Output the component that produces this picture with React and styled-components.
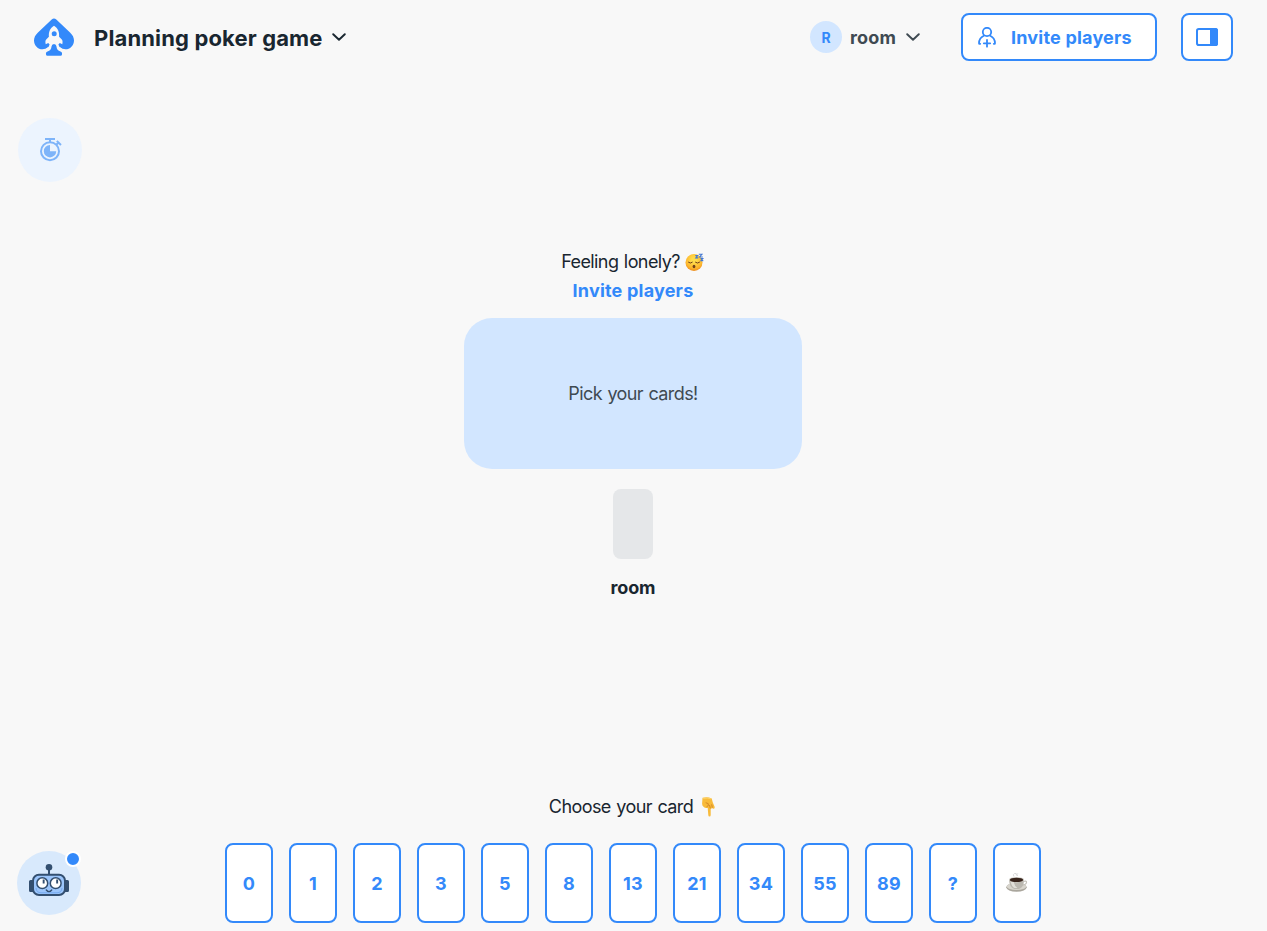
import React from "react";
import styled, { createGlobalStyle } from "styled-components";

const blue = "#3389fa";
const ink = "#192630";

const Global = createGlobalStyle`
  * { box-sizing: border-box; }
  body { margin: 0; background: #f8f8f8; color: ${ink}; font-family: Inter, "Liberation Sans", sans-serif; }
  button { font: inherit; color: inherit; cursor: pointer; }
  svg { display: block; flex: none; }
`;

const Page = styled.div`
  height: 931px;
  display: flex;
  flex-direction: column;
  overflow: hidden;
`;

const Header = styled.header`
  height: 74px;
  padding: 0 34px;
  display: flex;
  align-items: center;
  justify-content: space-between;
`;

const Group = styled.div`
  display: flex;
  align-items: center;
  gap: ${(p) => p.$gap}px;
`;

const PlainButton = styled.button`
  border: 0;
  background: none;
  padding: 0;
  display: flex;
  align-items: center;
  text-align: left;
  gap: ${(p) => p.$gap || 0}px;
`;

const GameTitle = styled.h1`
  margin: 0;
  padding-top: 2px;
  font-size: 22px;
  font-weight: 700;
  line-height: 28px;
  width: 229px;
  white-space: nowrap;
  letter-spacing: 0.14px;
`;

const UserName = styled.span`
  padding-top: 2px;
  font-size: 18px;
  font-weight: 700;
  line-height: 24px;
  width: 47px;
  letter-spacing: 0.2px;
  color: #3f4a52;
`;

const Avatar = styled.span`
  width: 32px;
  height: 32px;
  border-radius: 50%;
  background: #d2e6ff;
  color: ${blue};
  display: grid;
  place-items: center;
  font-size: 14px;
  font-weight: 700;
  padding-top: 1px;
`;

const OutlineButton = styled.button`
  width: ${(p) => p.$width}px;
  height: 48px;
  padding: 0 ${(p) => p.$pad || 0}px;
  display: flex;
  align-items: center;
  justify-content: ${(p) => (p.$pad ? "flex-start" : "center")};
  gap: 15px;
  border: 2px solid ${blue};
  border-radius: 8px;
  background: #fff;
  color: ${blue};
  font-size: 18px;
  font-weight: 700;
  letter-spacing: 0.2px;
  white-space: nowrap;
`;

const Room = styled.main`
  flex: 1;
  display: grid;
  grid-template-columns: 84px 1fr 85px;
`;

const Timer = styled.button`
  width: 64px;
  height: 64px;
  margin: 44px 0 0 18px;
  padding: 0 0 0 2px;
  border: 0;
  border-radius: 50%;
  background: #ecf4fe;
  display: grid;
  place-items: center;
`;

const Board = styled.section`
  display: flex;
  flex-direction: column;
  align-items: center;
  padding-top: 173px;
`;

const Hint = styled.p`
  margin: 0;
  display: flex;
  align-items: center;
  gap: ${(p) => p.$gap}px;
  height: 29px;
  font-size: 18px;
  line-height: 29px;
  letter-spacing: -0.58px;
  word-spacing: 1px;
  white-space: nowrap;
`;

const InviteLink = styled.button`
  border: 0;
  background: none;
  padding: 0;
  height: 29px;
  color: ${blue};
  font-size: 18px;
  font-weight: 700;
  letter-spacing: 0.2px;
`;

const Table = styled.div`
  width: 338px;
  height: 151px;
  margin-top: 13px;
  border-radius: 28px;
  background: #d2e6ff;
  color: #3f4a52;
  display: grid;
  place-items: center;
  font-size: 18px;
  letter-spacing: -0.6px;
  word-spacing: 1px;
`;

const Seat = styled.div`
  width: 40px;
  height: 70px;
  margin-top: 20px;
  border-radius: 8px;
  background: #e5e7e9;
`;

const PlayerName = styled.strong`
  margin-top: 17px;
  font-size: 18px;
  line-height: 24px;
  font-weight: 700;
  letter-spacing: -0.15px;
`;

const Footer = styled.footer`
  height: 139px;
  display: grid;
  grid-template-columns: 84px 1fr 85px;
`;

const Bot = styled.button`
  position: relative;
  align-self: end;
  width: 64px;
  height: 64px;
  margin: 0 0 16px 17px;
  padding: 0 0 6px;
  border: 0;
  border-radius: 50%;
  background: #d8e9fc;
  display: grid;
  place-items: center;
`;

const Badge = styled.span`
  position: absolute;
  top: 0;
  right: 0;
  width: 16px;
  height: 16px;
  border-radius: 50%;
  border: 2px solid #fff;
  background: ${blue};
`;

const Picker = styled.section`
  display: flex;
  flex-direction: column;
  align-items: center;
`;

const Cards = styled.div`
  display: flex;
  gap: 16px;
  margin-top: 22px;
`;

const Card = styled.button`
  width: 48px;
  height: 80px;
  padding: 0;
  border: 2px solid ${blue};
  border-radius: 8px;
  background: #fff;
  color: ${blue};
  display: grid;
  place-items: center;
  font-size: 18px;
  font-weight: 700;
  letter-spacing: 0.3px;
`;

const Logo = () => (
  <svg width="40" height="38" viewBox="0 0 40 38">
    <path fill={blue} d="M17.700 1.600Q20-.5 22.300 1.600L36 14.400c2.700 2.600 4 5 4 8.100 0 5.200-4 8.800-8.500 8.800-2 0-3.800-.6-5.200-1.700H13.700c-1.400 1.100-3.200 1.700-5.200 1.700C4 31.300 0 27.700 0 22.500c0-3.100 1.300-5.500 4-8.100z" />
    <path fill="#f8f8f8" d="M20 7.800c3.900 2.600 5.500 6 5.100 10.900l2.700 2.800c.8.900 1 2 .5 4.700l-2.500-1.300-1.400 1.600q.3 2.600 3.300 3.700v3H12.300v-3q3-1.100 3.300-3.700l-1.400-1.600-2.500 1.300c-.5-2.700-.3-3.800.5-4.700l2.700-2.800C14.500 13.800 16.100 10.400 20 7.800z" />
    <circle cx="20.200" cy="15.700" r="2.500" fill={blue} />
    <path fill={blue} d="M20 26q2.300 0 2.500 2.500.2 3.800 4 5.100c1.300.5 1.700 1.300 1.500 2.800q-.2 1.300-1.400 1.300H13.400q-1.200 0-1.400-1.300c-.2-1.500.2-2.300 1.500-2.800q3.800-1.300 4-5.100Q17.700 26 20 26z" />
  </svg>
);

const Chevron = ({ color = ink }) => (
  <svg width="14" height="8" viewBox="0 0 14 8" fill="none" stroke={color} strokeWidth="1.900" strokeLinecap="round" strokeLinejoin="round">
    <path d="M1.200 1.200 7 6.800l5.800-5.600" />
  </svg>
);

const AddPlayerIcon = () => (
  <svg width="18" height="21" viewBox="0 0 18 21" fill="none" stroke={blue} strokeWidth="1.800" strokeLinecap="round">
    <circle cx="9" cy="5" r="4.200" />
    <path d="M5.800 8.800C2.800 10.200 1.100 12.700 1 16.200q0 .6.600.6h.6M12.200 8.800c3 1.400 4.700 3.900 4.800 7.400q0 .6-.6.6h-.6M9 12.900v6.800M5.800 16.300h6.400" />
  </svg>
);

const SidebarIcon = () => (
  <svg width="22" height="18" viewBox="0 0 22 18">
    <rect x="1" y="1" width="20" height="16" rx="1.800" fill="#fff" stroke={blue} strokeWidth="2" />
    <path fill={blue} d="M14 0h5.500Q22 0 22 2.500v13q0 2.500-2.500 2.500H14z" />
  </svg>
);

const TimerIcon = () => (
  <svg width="22" height="24" viewBox="0 0 22 24" fill="none" stroke="#7eb4f9" strokeWidth="2">
    <circle cx="10" cy="13.200" r="9" />
    <path d="M5 1h10M10 1v3M16.500 6.500l2-2M16.800 3l4.200 4" />
    <path fill="#7eb4f9" stroke="none" d="M10 7v6.200h6.200A6.200 6.200 0 1 1 10 7z" />
  </svg>
);

const SleepyFace = () => (
  <svg width="20" height="20" viewBox="0 0 20 20">
    <defs>
      <radialGradient id="face" cx=".5" cy=".35" r=".65">
        <stop offset=".2" stopColor="#ffdc4c" />
        <stop offset=".75" stopColor="#fdb62d" />
        <stop offset="1" stopColor="#ec8c20" />
      </radialGradient>
    </defs>
    <circle cx="9" cy="10.500" r="8.500" fill="url(#face)" />
    <path d="M3.500 10.300q1.900 1.700 3.800 0M10.500 10.300q2 1.700 4 0" fill="none" stroke="#70401a" strokeWidth="1" strokeLinecap="round" />
    <ellipse cx="9" cy="14.500" rx="1.400" ry="1.700" fill="#70401a" />
    <path d="M10.300 3.600h2.300l-1.800 2.300h2.400M13.800 2.200h3.200L14.600 5h3.200M15.500 6.600h2.300l-1.800 2h2.300" fill="none" stroke="#4278d2" strokeWidth="1.100" />
  </svg>
);

const PointDown = () => (
  <svg width="16" height="20" viewBox="0 0 16 20">
    <path fill="#f8bb3b" d="M1.500.8q5-1.200 9.200.6l1.100 4.200 1.800 4.200q.4 1.800-1.200 2-.8 0-1.400-.8-.6 1-1.300.6V18q0 1.500-1.200 1.500T7.300 18l-.6-7Q4 11.500 2.500 9.800 1 8.700 1.100 6.500z" />
    <path d="m8.500 8 .8 3.500M10.700 7.300l.6 3.300M5.500 9.800q2.800-.8 1.700-3.200L4.700 5.700" fill="none" stroke="#cb7b25" strokeWidth=".8" />
    <path d="M2.200 1.400q4-1 8 .5" fill="none" stroke="#ffd568" strokeWidth="1" />
  </svg>
);

const Coffee = () => (
  <svg width="22" height="20" viewBox="0 0 22 20">
    <ellipse cx="10.500" cy="14.300" rx="10.200" ry="4.500" fill="#aaa69d" />
    <ellipse cx="10.500" cy="13.400" rx="9.700" ry="3.700" fill="#d8d5cd" />
    <path d="M17.500 8.500c4-1.800 4.500 2.700-1 3.700" fill="none" stroke="#c5c2ba" strokeWidth="1.200" />
    <path d="M3 6.500h15q0 8-5 9.400H8.200Q3.400 14.300 3 6.500z" fill="#bbb8b0" />
    <path d="M4.500 8.500q1.500 5.500 4 6.500l3-.1q-3-2-3.800-6z" fill="#e1dfd9" />
    <ellipse cx="10.500" cy="6.700" rx="7.500" ry="2.700" fill="#d4d1ca" />
    <ellipse cx="10.500" cy="6.900" rx="6.700" ry="2.200" fill="#38241c" />
    <path d="M8 3.500q-1.700-2 .6-3t1.800 2M11.500 3q-1-1.600.3-2.600" fill="none" stroke="#d5d5d5" strokeWidth=".9" />
  </svg>
);

const BotFace = () => (
  <svg width="40" height="34" viewBox="0 0 40 34">
    <path d="M20 5v6" stroke="#334f70" strokeWidth="2" />
    <circle cx="20" cy="4.300" r="3.300" fill="#334f70" />
    <path fill="#334f70" d="M1.500 17H5v12H1.500Q0 29 0 27.500v-9Q0 17 1.500 17zM35 17h3.500q1.500 0 1.500 1.500v9q0 1.500-1.500 1.500H35z" />
    <rect x="4" y="11.800" width="32" height="20.200" rx="6" fill="#9bc5fb" stroke="#334f70" strokeWidth="2" />
    <path d="M7 25q.5 4.800 5 4.800h16q4.500 0 5-4.800" fill="none" stroke="#75a9ed" strokeWidth="1" />
    <circle cx="13.300" cy="20.200" r="5.400" fill="#fff" stroke="#334f70" strokeWidth="1.500" />
    <circle cx="26.700" cy="20.200" r="5.400" fill="#fff" stroke="#334f70" strokeWidth="1.500" />
    <path d="M13.700 16.500h1.900v4h-1.900zM27.200 16.500h1.900v4h-1.900z" fill="#334f70" />
    <path d="M17.300 27q2.700 3.200 5.400 0" fill="none" stroke="#334f70" strokeWidth="1.400" strokeLinecap="round" />
  </svg>
);

const values = ["0", "1", "2", "3", "5", "8", "13", "21", "34", "55", "89", "?"];

export default function App() {
  return (
    <Page>
      <Global />
      <Header>
        <Group $gap={20}>
          <Logo />
          <PlainButton $gap={9}>
            <GameTitle>Planning poker game</GameTitle>
            <Chevron />
          </PlainButton>
        </Group>
        <Group $gap={24}>
          <Group $gap={41}>
            <PlainButton $gap={8}>
              <Avatar>R</Avatar>
              <Group $gap={9}>
                <UserName>room</UserName>
                <Chevron color="#3f4a52" />
              </Group>
            </PlainButton>
            <OutlineButton $width={196} $pad={15}>
              <AddPlayerIcon />
              Invite players
            </OutlineButton>
          </Group>
          <OutlineButton $width={52} aria-label="Toggle sidebar">
            <SidebarIcon />
          </OutlineButton>
        </Group>
      </Header>
      <Room>
        <Timer aria-label="Timer"><TimerIcon /></Timer>
        <Board>
          <Hint $gap={5}>Feeling lonely? <SleepyFace /></Hint>
          <InviteLink>Invite players</InviteLink>
          <Table>Pick your cards!</Table>
          <Seat />
          <PlayerName>room</PlayerName>
        </Board>
      </Room>
      <Footer>
        <Bot aria-label="Assistant">
          <BotFace />
          <Badge />
        </Bot>
        <Picker>
          <Hint $gap={8}>Choose your card <PointDown /></Hint>
          <Cards>
            {values.map((v) => <Card key={v}>{v}</Card>)}
            <Card aria-label="Coffee break"><Coffee /></Card>
          </Cards>
        </Picker>
      </Footer>
    </Page>
  );
}
